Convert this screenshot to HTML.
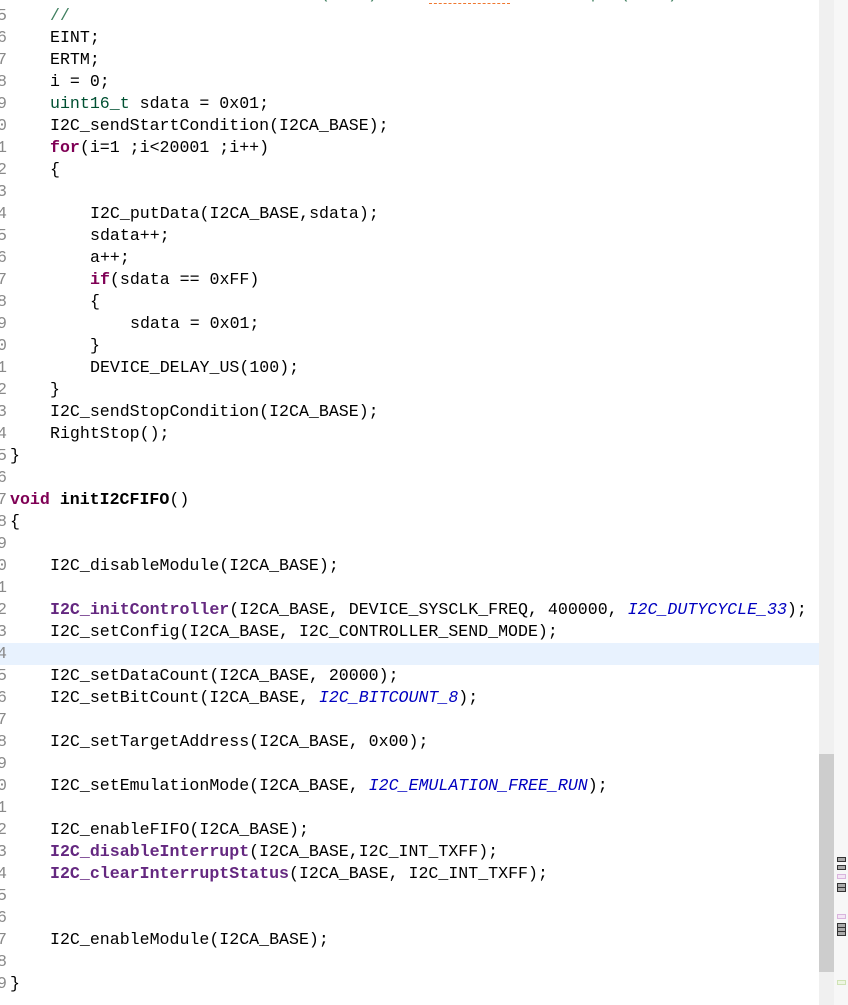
<!DOCTYPE html>
<html><head><meta charset="utf-8"><style>
html,body{margin:0;padding:0;background:#fff;width:848px;height:1005px;overflow:hidden;position:relative}
.ln{position:absolute;left:0;width:819px;height:22px;line-height:22px;font-family:"Liberation Mono",monospace;font-size:16.6px;color:#000;white-space:pre}
.n{position:absolute;left:-3px;top:0;color:#8a8a8a}
.c{position:absolute;top:0}
.k{color:#7f0055;font-weight:bold}
.f{color:#642880;font-weight:bold}
.i{color:#0000c0;font-style:italic}
.g{color:#3f7f5f}
.t{color:#005032}
.hl{background:#e8f2fe}
#sb{position:absolute;left:819px;top:0;width:15px;height:1005px;background:#f0f0f0}
#th{position:absolute;left:819px;top:754px;width:15px;height:218px;background:#cdcdcd}
#rr{position:absolute;left:834px;top:0;width:14px;height:1005px;background:#f7f7f7}
.m{position:absolute;left:837px;width:7px;height:3px;border:1px solid #333;background:#aaa}
.p{position:absolute;left:837px;width:7px;height:3px;border:1px solid #d9b3dd;background:#f3e6f5}
</style></head><body>
<div class="ln" style="top:-17px"><span class="c g" style="left:50px">//</span><span class="c g" style="left:320px">(</span><span class="c g" style="left:368px">)</span><span class="c g" style="left:588px">|</span><span class="c g" style="left:620px">(</span><span class="c g" style="left:668px">)</span></div>
<div style="position:absolute;left:429px;top:1px;width:81px;height:2px;border-bottom:1px dashed #f07830"></div>
<div class="ln" style="top:5px"><span class="n">5</span><span class="c g" style="left:50px">//</span></div>
<div class="ln" style="top:27px"><span class="n">6</span><span class="c" style="left:50px">EINT;</span></div>
<div class="ln" style="top:49px"><span class="n">7</span><span class="c" style="left:50px">ERTM;</span></div>
<div class="ln" style="top:71px"><span class="n">8</span><span class="c" style="left:50px">i = 0;</span></div>
<div class="ln" style="top:93px"><span class="n">9</span><span class="c" style="left:50px"><span class="t">uint16_t</span> sdata = 0x01;</span></div>
<div class="ln" style="top:115px"><span class="n">0</span><span class="c" style="left:50px">I2C_sendStartCondition(I2CA_BASE);</span></div>
<div class="ln" style="top:137px"><span class="n">1</span><span class="c" style="left:50px"><span class="k">for</span>(i=1 ;i&lt;20001 ;i++)</span></div>
<div class="ln" style="top:159px"><span class="n">2</span><span class="c" style="left:50px">{</span></div>
<div class="ln" style="top:181px"><span class="n">3</span></div>
<div class="ln" style="top:203px"><span class="n">4</span><span class="c" style="left:90px">I2C_putData(I2CA_BASE,sdata);</span></div>
<div class="ln" style="top:225px"><span class="n">5</span><span class="c" style="left:90px">sdata++;</span></div>
<div class="ln" style="top:247px"><span class="n">6</span><span class="c" style="left:90px">a++;</span></div>
<div class="ln" style="top:269px"><span class="n">7</span><span class="c" style="left:90px"><span class="k">if</span>(sdata == 0xFF)</span></div>
<div class="ln" style="top:291px"><span class="n">8</span><span class="c" style="left:90px">{</span></div>
<div class="ln" style="top:313px"><span class="n">9</span><span class="c" style="left:130px">sdata = 0x01;</span></div>
<div class="ln" style="top:335px"><span class="n">0</span><span class="c" style="left:90px">}</span></div>
<div class="ln" style="top:357px"><span class="n">1</span><span class="c" style="left:90px">DEVICE_DELAY_US(100);</span></div>
<div class="ln" style="top:379px"><span class="n">2</span><span class="c" style="left:50px">}</span></div>
<div class="ln" style="top:401px"><span class="n">3</span><span class="c" style="left:50px">I2C_sendStopCondition(I2CA_BASE);</span></div>
<div class="ln" style="top:423px"><span class="n">4</span><span class="c" style="left:50px">RightStop();</span></div>
<div class="ln" style="top:445px"><span class="n">5</span><span class="c" style="left:10px">}</span></div>
<div class="ln" style="top:467px"><span class="n">6</span></div>
<div class="ln" style="top:489px"><span class="n">7</span><span class="c" style="left:10px"><span class="k">void</span> <b>initI2CFIFO</b>()</span></div>
<div class="ln" style="top:511px"><span class="n">8</span><span class="c" style="left:10px">{</span></div>
<div class="ln" style="top:533px"><span class="n">9</span></div>
<div class="ln" style="top:555px"><span class="n">0</span><span class="c" style="left:50px">I2C_disableModule(I2CA_BASE);</span></div>
<div class="ln" style="top:577px"><span class="n">1</span></div>
<div class="ln" style="top:599px"><span class="n">2</span><span class="c" style="left:50px"><span class="f">I2C_initController</span>(I2CA_BASE, DEVICE_SYSCLK_FREQ, 400000, <span class="i">I2C_DUTYCYCLE_33</span>);</span></div>
<div class="ln" style="top:621px"><span class="n">3</span><span class="c" style="left:50px">I2C_setConfig(I2CA_BASE, I2C_CONTROLLER_SEND_MODE);</span></div>
<div class="ln hl" style="top:643px"><span class="n">4</span></div>
<div class="ln" style="top:665px"><span class="n">5</span><span class="c" style="left:50px">I2C_setDataCount(I2CA_BASE, 20000);</span></div>
<div class="ln" style="top:687px"><span class="n">6</span><span class="c" style="left:50px">I2C_setBitCount(I2CA_BASE, <span class="i">I2C_BITCOUNT_8</span>);</span></div>
<div class="ln" style="top:709px"><span class="n">7</span></div>
<div class="ln" style="top:731px"><span class="n">8</span><span class="c" style="left:50px">I2C_setTargetAddress(I2CA_BASE, 0x00);</span></div>
<div class="ln" style="top:753px"><span class="n">9</span></div>
<div class="ln" style="top:775px"><span class="n">0</span><span class="c" style="left:50px">I2C_setEmulationMode(I2CA_BASE, <span class="i">I2C_EMULATION_FREE_RUN</span>);</span></div>
<div class="ln" style="top:797px"><span class="n">1</span></div>
<div class="ln" style="top:819px"><span class="n">2</span><span class="c" style="left:50px">I2C_enableFIFO(I2CA_BASE);</span></div>
<div class="ln" style="top:841px"><span class="n">3</span><span class="c" style="left:50px"><span class="f">I2C_disableInterrupt</span>(I2CA_BASE,I2C_INT_TXFF);</span></div>
<div class="ln" style="top:863px"><span class="n">4</span><span class="c" style="left:50px"><span class="f">I2C_clearInterruptStatus</span>(I2CA_BASE, I2C_INT_TXFF);</span></div>
<div class="ln" style="top:885px"><span class="n">5</span></div>
<div class="ln" style="top:907px"><span class="n">6</span></div>
<div class="ln" style="top:929px"><span class="n">7</span><span class="c" style="left:50px">I2C_enableModule(I2CA_BASE);</span></div>
<div class="ln" style="top:951px"><span class="n">8</span></div>
<div class="ln" style="top:973px"><span class="n">9</span><span class="c" style="left:10px">}</span></div>
<div id="sb"></div><div id="th"></div><div id="rr"></div>
<div class="m" style="top:857px"></div>
<div class="m" style="top:865px"></div>
<div class="p" style="top:874px"></div>
<div class="m" style="top:883px"></div>
<div class="m" style="top:887px"></div>
<div class="p" style="top:914px"></div>
<div class="m" style="top:923px"></div>
<div class="m" style="top:927px"></div>
<div class="m" style="top:931px"></div>
<div class="p" style="top:980px;border-color:#cfe3b5;background:#eef6e3"></div>
</body></html>
